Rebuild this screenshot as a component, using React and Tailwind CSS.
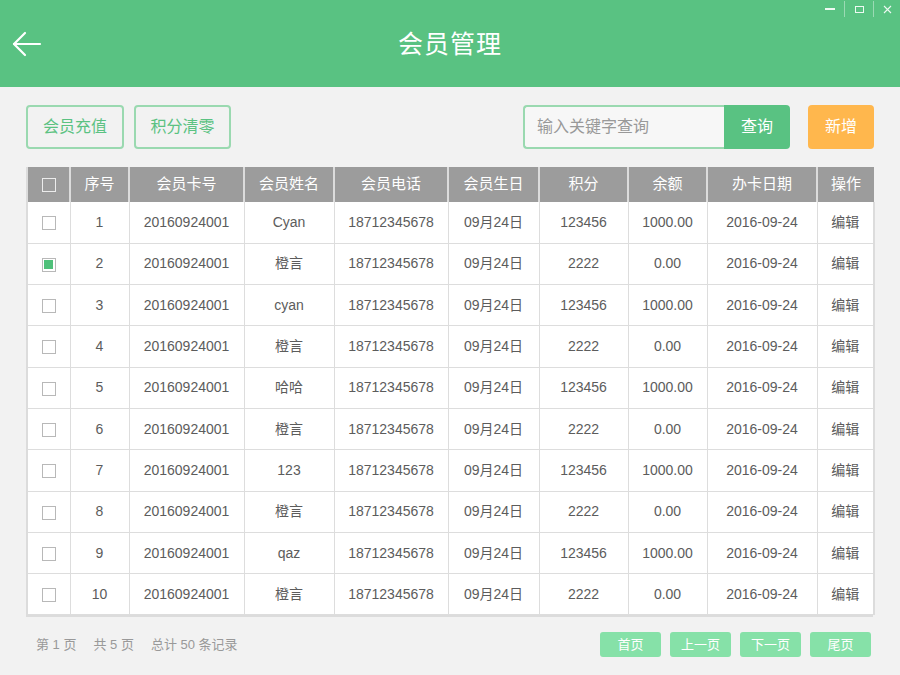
import React from 'react';

const columns = [
  { key: 'check', label: '', width: 43 },
  { key: 'no', label: '序号', width: 59 },
  { key: 'card', label: '会员卡号', width: 115 },
  { key: 'name', label: '会员姓名', width: 90 },
  { key: 'phone', label: '会员电话', width: 114 },
  { key: 'birthday', label: '会员生日', width: 91 },
  { key: 'points', label: '积分', width: 89 },
  { key: 'balance', label: '余额', width: 79 },
  { key: 'date', label: '办卡日期', width: 110 },
  { key: 'op', label: '操作', width: 57 }
];

const names = ['Cyan', '橙言', 'cyan', '橙言', '哈哈', '橙言', '123', '橙言', 'qaz', '橙言'];

const rows = names.map((name, i) => ({
  no: i + 1,
  card: '20160924001',
  name,
  phone: '18712345678',
  birthday: '09月24日',
  points: i % 2 === 0 ? '123456' : '2222',
  balance: i % 2 === 0 ? '1000.00' : '0.00',
  date: '2016-09-24',
  op: '编辑',
  checked: i === 1
}));

const Checkbox = ({ checked, header }) => {
  if (header) {
    return <span className="inline-block w-[14px] h-[14px] border-[1.5px] border-[#ececec] align-middle" />;
  }
  return (
    <span className="inline-block w-[14px] h-[14px] border border-[#b8b8b8] bg-white align-middle p-[1.5px]">
      {checked && <span className="block w-full h-full bg-[#4fc07a]" />}
    </span>
  );
};

const App = () => {
  return (
    <div
      className="w-[900px] h-[675px] bg-[#f2f2f2] flex flex-col overflow-hidden"
      style={{ fontFamily: '"Liberation Sans", "Noto Sans CJK SC", sans-serif' }}
    >
      {/* header */}
      <div className="relative h-[87px] bg-[#59c282] flex items-center justify-center shrink-0">
        <button className="absolute left-[12px] top-[30px] text-white">
          <svg width="30" height="28" viewBox="0 0 30 28" fill="none" stroke="white" strokeWidth="2.2" strokeLinecap="round" strokeLinejoin="round">
            <path d="M28 14H2" />
            <path d="M13 3L2 14l11 11" />
          </svg>
        </button>
        <h1 className="text-white text-[25px] tracking-[1px] mt-[2px]">会员管理</h1>
        <div className="absolute right-0 top-0 flex items-center h-[18px]">
          <span className="w-[28px] h-full flex items-center justify-center">
            <span className="block w-[10px] h-[1.5px] bg-white/90" />
          </span>
          <span className="w-px h-[16px] bg-white/40" />
          <span className="w-[28px] h-full flex items-center justify-center">
            <span className="block w-[9px] h-[7px] border border-white/90" />
          </span>
          <span className="w-px h-[16px] bg-white/40" />
          <span className="w-[26px] h-full flex items-center justify-center">
            <svg width="9" height="9" viewBox="0 0 9 9" stroke="white" strokeWidth="1.1" opacity="0.9">
              <path d="M1 1l7 7M8 1L1 8" />
            </svg>
          </span>
        </div>
      </div>

      {/* toolbar */}
      <div className="flex items-center px-[26px] mt-[18px] h-[44px]">
        <button className="h-[44px] w-[98px] border-2 border-[#9ad9b0] rounded-[4px] text-[#5bc282] text-[16px]">会员充值</button>
        <button className="ml-[10px] h-[44px] w-[97px] border-2 border-[#9ad9b0] rounded-[4px] text-[#5bc282] text-[16px]">积分清零</button>
        <div className="ml-auto flex h-[44px] mr-[1px]">
          <div className="w-[201px] h-full border-2 border-r-0 border-[#9ad9b0] rounded-l-[4px] bg-[#f7f7f7] flex items-center px-[12px] text-[16px] text-[#999]">
            输入关键字查询
          </div>
          <button className="w-[66px] h-full bg-[#59c282] rounded-r-[4px] text-white text-[16px]">查询</button>
        </div>
        <button className="ml-[17px] w-[66px] h-[44px] bg-[#ffb74d] rounded-[4px] text-white text-[16px]">新增</button>
      </div>

      {/* table */}
      <div className="mx-[26px] mt-[18px]">
        <table className="border-collapse table-fixed w-[847px] text-center">
          <colgroup>
            {columns.map((c) => (
              <col key={c.key} style={{ width: c.width }} />
            ))}
          </colgroup>
          <thead>
            <tr className="h-[35px] bg-[#9c9c9c] text-white text-[15px]">
              {columns.map((c, i) => (
                <th
                  key={c.key}
                  className={`font-normal border-l-2 border-[#dcdcdc] ${i === 0 ? 'border-l-0' : ''}`}
                >
                  {c.key === 'check' ? <Checkbox header /> : c.label}
                </th>
              ))}
            </tr>
          </thead>
          <tbody className="bg-white text-[14px] text-[#5c5c5c]">
            {rows.map((r) => (
              <tr key={r.no} className="h-[41.3px] border-b border-[#dddddd]">
                {columns.map((c, i) => (
                  <td
                    key={c.key}
                    className={`border-l border-[#dddddd] ${i === 0 ? 'border-l-2 border-l-[#dcdcdc]' : ''} ${
                      i === columns.length - 1 ? 'border-r-2 border-r-[#dcdcdc]' : ''
                    }`}
                  >
                    {c.key === 'check' ? <Checkbox checked={r.checked} /> : r[c.key]}
                  </td>
                ))}
              </tr>
            ))}
          </tbody>
        </table>
        <div className="h-[2px] w-[847px] bg-[#dcdcdc]" />
      </div>

      {/* footer */}
      <div className="flex items-center px-[26px] mt-[15px]">
        <div className="pl-[10px] text-[13px] text-[#999] flex gap-[17px]">
          <span>第 1 页</span>
          <span>共 5 页</span>
          <span>总计 50 条记录</span>
        </div>
        <div className="ml-auto flex gap-[9px] mr-[3px]">
          {['首页', '上一页', '下一页', '尾页'].map((t) => (
            <button key={t} className="w-[61px] h-[25px] bg-[#86e1a8] rounded-[3px] text-white text-[13px]">
              {t}
            </button>
          ))}
        </div>
      </div>
    </div>
  );
};

export default App;
